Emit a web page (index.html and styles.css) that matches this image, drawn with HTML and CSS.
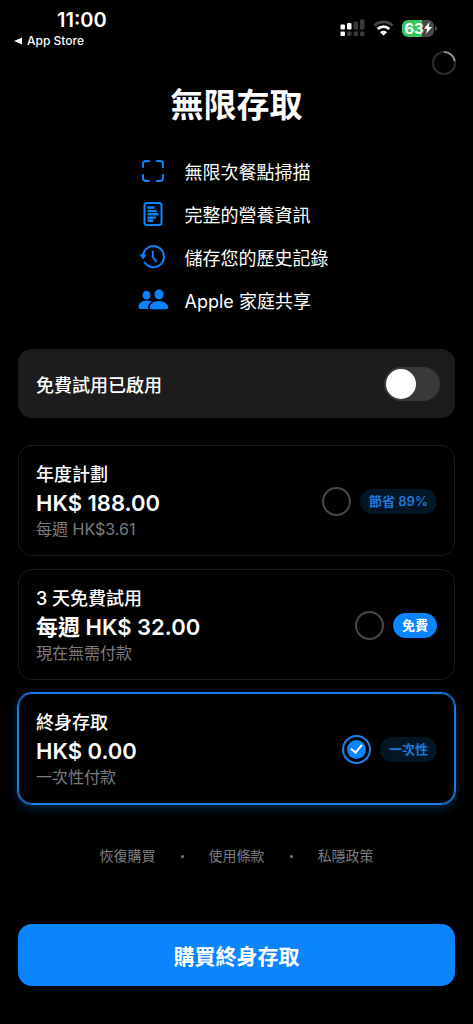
FILE: index.html
```html
<!DOCTYPE html>
<html lang="zh-Hant">
<head>
<meta charset="utf-8">
<meta name="viewport" content="width=device-width, initial-scale=1">
<title>無限存取</title>
<link rel="stylesheet" href="styles.css">
</head>
<body>
<header class="status">
  <div class="status-left">
    <span class="clock">11:00</span>
    <a class="back" href="#"><svg width="8" height="8" viewBox="0 0 8 8" aria-hidden="true"><path d="M8 0.5v7L0 4z" fill="#fff"/></svg>App Store</a>
  </div>
  <div class="status-right">
    <svg width="25" height="18" viewBox="0 0 25 18" aria-hidden="true">
      <g fill="#fff"><rect x="0.5" y="5.5" width="4.5" height="5" rx="1"/><rect x="7" y="4" width="4.5" height="6.500" rx="1"/><rect x="0.5" y="12.500" width="4.500" height="4.500" rx="1"/></g>
      <g fill="#3a3a3c"><rect x="13.500" y="2.500" width="4.500" height="8" rx="1"/><rect x="20" y="0.500" width="4.500" height="10" rx="1"/><rect x="7" y="12.500" width="4.500" height="4.500" rx="1"/><rect x="13.500" y="12.500" width="4.500" height="4.500" rx="1"/><rect x="20" y="12.500" width="4.500" height="4.500" rx="1"/></g>
    </svg>
    <svg width="21" height="16" viewBox="0 0 21 16" aria-hidden="true">
      <path d="M1.500 5.500a13 13 0 0 1 18 0" fill="none" stroke="#48484a" stroke-width="2.800"/>
      <path d="M4.700 9a8.500 8.500 0 0 1 11.600 0" fill="none" stroke="#fff" stroke-width="2.800"/>
      <path d="M10.500 15.500L7 12.200a5 5 0 0 1 7 0z" fill="#fff"/>
    </svg>
    <div class="battery">
      <span class="battery-body">63<svg width="8" height="12" viewBox="0 0 8 12" aria-hidden="true"><path d="M5.500 0L0 6.800h3.200L2 12l6-7H4.700z" fill="#fff"/></svg></span>
      <span class="battery-tip"></span>
    </div>
  </div>
</header>
<div class="loading">
  <svg width="26" height="26" viewBox="0 0 26 26" role="img" aria-label="載入中">
    <circle cx="13" cy="13" r="11" fill="none" stroke="#2c2c2e" stroke-width="2"/>
    <path d="M13 2a11 11 0 0 1 10.800 9" fill="none" stroke="#8e8e93" stroke-width="2"/>
  </svg>
</div>
<main>
  <h1>無限存取</h1>
  <ul class="features">
    <li>
      <svg width="32" height="26" viewBox="0 0 32 26" aria-hidden="true"><path d="M6 9V6a3 3 0 0 1 3-3h3M20 3h3a3 3 0 0 1 3 3v3M26 17v3a3 3 0 0 1-3 3h-3M12 23H9a3 3 0 0 1-3-3v-3" class="line"/></svg>
      無限次餐點掃描
    </li>
    <li>
      <svg width="32" height="26" viewBox="0 0 32 26" aria-hidden="true"><rect x="7.500" y="2" width="17" height="22" rx="2.500" class="line"/><path d="M10.500 6.500h7M10.500 10h9M10.500 13.300h11M10.500 16.600h8.500M10.500 19.800h6" class="bars"/></svg>
      完整的營養資訊
    </li>
    <li>
      <svg width="32" height="26" viewBox="0 0 32 26" aria-hidden="true"><path d="M6 11.500A10.500 10.500 0 1 1 7.700 18.500" class="line"/><path d="M15.800 7.500v5.500l3.200 4.500" class="line"/><path d="M2.800 10.500h6.800L6.200 15.500z" class="fill"/></svg>
      儲存您的歷史記錄
    </li>
    <li>
      <svg width="32" height="26" viewBox="0 0 32 26" aria-hidden="true"><g class="fill"><ellipse cx="9.500" cy="8.200" rx="3.900" ry="4.400"/><ellipse cx="22" cy="7.500" rx="4.500" ry="5"/><path d="M14.800 14.800c-1.500-.8-3.300-1.300-5.300-1.300-5 0-8 3.200-8 6.500 0 1.300.7 2 2.200 2h7.500c-1-2.200.6-5.300 3.600-7.200z"/><path d="M22 14c-5.600 0-9.200 3.400-9.200 6.300 0 1.300.8 1.900 2.200 1.900h14c1.400 0 2.200-.6 2.200-1.900 0-2.900-3.600-6.300-9.200-6.300z"/></g></svg>
      Apple 家庭共享
    </li>
  </ul>
  <label class="trial">
    <span>免費試用已啟用</span>
    <input class="switch" type="checkbox" role="switch">
  </label>
  <div class="plans" role="radiogroup" aria-label="計劃">
    <label class="plan">
      <span class="plan-text">
        <span class="plan-name">年度計劃</span>
        <span class="plan-price">HK$ 188.00</span>
        <span class="plan-note">每週 HK$3.61</span>
      </span>
      <input class="radio" type="radio" name="plan">
      <span class="badge">節省 89%</span>
    </label>
    <label class="plan">
      <span class="plan-text">
        <span class="plan-name">3 天免費試用</span>
        <span class="plan-price">每週 HK$ 32.00</span>
        <span class="plan-note">現在無需付款</span>
      </span>
      <input class="radio" type="radio" name="plan">
      <span class="badge badge-solid">免費</span>
    </label>
    <label class="plan">
      <span class="plan-text">
        <span class="plan-name">終身存取</span>
        <span class="plan-price">HK$ 0.00</span>
        <span class="plan-note">一次性付款</span>
      </span>
      <input class="radio" type="radio" name="plan" checked>
      <span class="badge">一次性</span>
    </label>
  </div>
  <nav class="links">
    <a href="#">恢復購買</a><span class="dot"></span><a href="#">使用條款</a><span class="dot"></span><a href="#">私隱政策</a>
  </nav>
  <button class="buy" type="button">購買終身存取</button>
</main>
</body>
</html>
```
FILE: styles.css
```css
* {
  box-sizing: border-box;
}

body {
  margin: 0;
  min-height: 100vh;
  display: flex;
  flex-direction: column;
  background: #000;
  color: #fff;
  font-family: Inter, "Noto Sans CJK TC", sans-serif;
}

a {
  color: inherit;
  text-decoration: none;
}

svg {
  display: block;
  flex: none;
}

.status {
  display: flex;
  justify-content: space-between;
  height: 50px;
  padding: 8px 36px 0 14px;
}

.status-left {
  display: flex;
  flex-direction: column;
}

.clock {
  padding-left: 43px;
  font-size: 20px;
  line-height: 24px;
  font-weight: 600;
}

.back {
  display: flex;
  align-items: center;
  gap: 5px;
  font-size: 12px;
  line-height: 18px;
  font-weight: 500;
}

.status-right {
  display: flex;
  align-items: center;
  gap: 8px;
  height: 40px;
}

.battery {
  display: flex;
  align-items: center;
  gap: 1px;
}

.battery-body {
  display: flex;
  align-items: center;
  justify-content: center;
  width: 32px;
  height: 17px;
  border-radius: 6px;
  background: linear-gradient(90deg, #34c759 63%, #48484a 63%);
  font-size: 15px;
  font-weight: 700;
}

.battery-tip {
  width: 2px;
  height: 5px;
  border-radius: 0 2px 2px 0;
  background: #48484a;
}

.loading {
  display: flex;
  justify-content: flex-end;
  padding-right: 16px;
}

main {
  flex: 1;
  display: flex;
  flex-direction: column;
  padding: 4px 18px 38px;
}

h1 {
  margin: 0;
  font-size: 33px;
  line-height: 50px;
  font-weight: 700;
  text-align: center;
}

.features {
  display: flex;
  flex-direction: column;
  align-self: center;
  margin: 19px 0 28px;
  padding: 0 8px 0 0;
  list-style: none;
  font-size: 18px;
}

.features li {
  display: flex;
  align-items: center;
  gap: 16px;
  height: 43px;
}

.line {
  fill: none;
  stroke: #0a84ff;
  stroke-width: 2;
  stroke-linecap: round;
  stroke-linejoin: round;
}

.bars {
  fill: none;
  stroke: #0a84ff;
  stroke-width: 2.4;
}

.fill {
  fill: #0a84ff;
}

.trial {
  display: flex;
  align-items: center;
  justify-content: space-between;
  min-height: 69px;
  padding: 0 15px 0 18px;
  border-radius: 14px;
  background: #1c1c1e;
  font-size: 18px;
  font-weight: 500;
}

.switch {
  appearance: none;
  display: flex;
  width: 56px;
  height: 34px;
  margin: 0;
  padding: 2px;
  border-radius: 17px;
  background: #39393b;
}

.switch::before {
  content: "";
  width: 30px;
  height: 30px;
  border-radius: 50%;
  background: #fff;
}

.switch:checked {
  justify-content: flex-end;
  background: #34c759;
}

.plans {
  display: flex;
  flex-direction: column;
  gap: 13px;
  margin-top: 27px;
}

.plan {
  display: flex;
  align-items: center;
  gap: 9px;
  padding: 16px 17px 15px;
  border: 1px solid #1c1c1e;
  border-radius: 14px;
}

.plan:has(:checked) {
  border-color: #1a7fe8;
  box-shadow: 0 0 0 1px #1a7fe8, 0 3px 9px 1px rgba(10, 132, 255, 0.3);
}

.plan-text {
  flex: 1;
  display: flex;
  flex-direction: column;
}

.plan-name {
  font-size: 18px;
  line-height: 26px;
  font-weight: 500;
}

.plan-price {
  font-size: 22px;
  line-height: 31px;
  font-weight: 600;
}

.plan-note {
  color: #7c7c80;
  font-size: 16px;
  line-height: 21px;
}

.radio {
  appearance: none;
  display: grid;
  place-items: center;
  width: 29px;
  height: 29px;
  margin: 0;
  border: 2px solid #48484a;
  border-radius: 50%;
}

.radio:checked {
  border-color: #1a7fe8;
}

.radio:checked::before,
.radio:checked::after {
  content: "";
  grid-area: 1 / 1;
}

.radio:checked::before {
  width: 19px;
  height: 19px;
  border-radius: 50%;
  background: #0a84ff;
}

.radio:checked::after {
  width: 5px;
  height: 9px;
  margin-bottom: 4px;
  border: solid #fff;
  border-width: 0 2px 2px 0;
  transform: rotate(40deg);
}

.badge {
  padding: 0 9px;
  border-radius: 13px;
  background: #031626;
  color: #1c78dc;
  font-size: 13px;
  line-height: 25px;
  font-weight: 600;
}

.badge-solid {
  background: #0a84ff;
  color: #fff;
}

.links {
  display: flex;
  align-items: center;
  justify-content: center;
  gap: 25px;
  margin: 40px 0;
  color: #7c7c80;
  font-size: 14px;
  line-height: 24px;
}

.dot {
  width: 3px;
  height: 3px;
  border-radius: 50%;
  background: #7c7c80;
}

.buy {
  min-height: 62px;
  margin-top: auto;
  border: 0;
  border-radius: 14px;
  background: #0a84ff;
  color: #fff;
  font-family: inherit;
  font-size: 21px;
  font-weight: 600;
}
```
